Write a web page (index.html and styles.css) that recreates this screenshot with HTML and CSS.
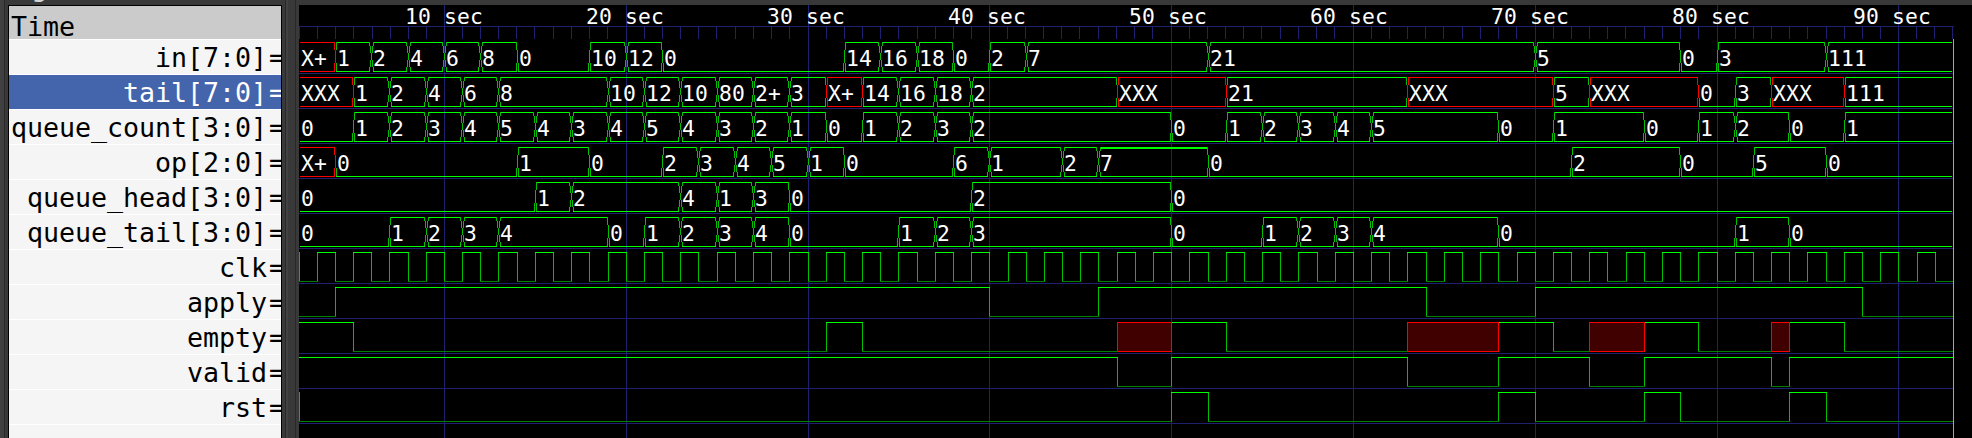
FILE: index.html
```
<!DOCTYPE html>
<html lang="en">
<head>
<meta charset="utf-8">
<title>Waveform viewer</title>
<link rel="stylesheet" href="styles.css">
</head>
<body>
<main class="viewer">
  <section class="signals">
    <div class="frame-title">Signals</div>
    <div class="signal-list">
      <div class="list-header">Time</div>
      <div class="signal"><span>in[7:0]</span><span class="eq">=</span></div>
      <div class="signal selected"><span>tail[7:0]</span><span class="eq">=</span></div>
      <div class="signal"><span>queue_count[3:0]</span><span class="eq">=</span></div>
      <div class="signal"><span>op[2:0]</span><span class="eq">=</span></div>
      <div class="signal"><span>queue_head[3:0]</span><span class="eq">=</span></div>
      <div class="signal"><span>queue_tail[3:0]</span><span class="eq">=</span></div>
      <div class="signal"><span>clk</span><span class="eq">=</span></div>
      <div class="signal"><span>apply</span><span class="eq">=</span></div>
      <div class="signal"><span>empty</span><span class="eq">=</span></div>
      <div class="signal"><span>valid</span><span class="eq">=</span></div>
      <div class="signal"><span>rst</span><span class="eq">=</span></div>
      <div class="signal"></div>
    </div>
  </section>
  <div class="splitter"></div>
  <section class="waves">
    <svg id="waves" class="wave-canvas" width="1673" height="433" viewBox="299 5 1673 433"></svg>
  </section>
</main>
<script src="waves.js"></script>
</body>
</html>
```
FILE: styles.css
```
html,
body {
  margin: 0;
  height: 100%;
  overflow: hidden;
  background: #393939;
}

.viewer {
  display: flex;
  height: 438px;
  font-family: "DejaVu Sans Mono", monospace;
}

.signals {
  display: flex;
  flex-direction: column;
  width: 277px;
  padding-left: 4px;
  border-left: 4px solid #404040;
  box-shadow: inset 1px 0 #282828;
}

.frame-title {
  display: flex;
  align-items: flex-end;
  box-sizing: border-box;
  height: 5px;
  padding: 0 0 4px 3px;
  overflow: hidden;
  color: #d4d4d4;
  font: bold 20px/20px "DejaVu Sans", sans-serif;
}

.signal-list {
  box-sizing: border-box;
  width: 274px;
  height: 433px;
  overflow: hidden;
  border: 1px solid #000;
  border-bottom: 0;
  background: #f5f5f5;
  color: #000;
  font-size: 26.667px;
  letter-spacing: -0.055px;
}

.list-header {
  box-sizing: border-box;
  height: 34px;
  padding: 5px 0 0 2px;
  border-bottom: 1px solid #fff;
  background: #cbcbcb;
  line-height: 31px;
}

.signal {
  display: flex;
  justify-content: flex-end;
  box-sizing: border-box;
  height: 35px;
  margin-right: -4px;
  border-bottom: 1px solid #fff;
  line-height: 35px;
  white-space: pre;
}

.eq {
  width: 16px;
  margin-left: 2px;
}

.selected {
  background: #4464ac;
  color: #fff;
}

.splitter {
  width: 9px;
  border-left: 1px solid #282828;
  border-right: 1px solid #282828;
  background: linear-gradient(to right, #424242 2px, #393939 2px);
}

.waves {
  flex: 1;
  padding: 5px 0 0 3px;
}

.wave-canvas {
  display: block;
  background: #000;
  font-size: 21.333px;
  letter-spacing: 0.157px;
  fill: #fff;
  shape-rendering: crispEdges;
  white-space: pre;
}

.grid { fill: #202070; }
.high { fill: #00ff00; }
.low { fill: #008000; }
.edge { fill: #00c000; }
.unknown { fill: #ff0000; }
.unknown-fill { fill: #400000; }
.cursor { fill: #ff8080; }
```
FILE: waves.js
```
const svg = document.getElementById('waves');
const NS = 'http://www.w3.org/2000/svg';
const LEFT = 299, END = 1953, ROW = 35, TOP = 42, H = 29;

const px = t => Math.floor(LEFT + (t - 2) * 18.18);

function rect(cls, x, y, w, h) {
  const r = document.createElementNS(NS, 'rect');
  r.setAttribute('class', cls);
  r.setAttribute('x', x);
  r.setAttribute('y', y);
  r.setAttribute('width', w);
  r.setAttribute('height', h);
  svg.appendChild(r);
}

function label(x, y, s) {
  const t = document.createElementNS(NS, 'text');
  t.setAttribute('x', x);
  t.setAttribute('y', y);
  t.textContent = s;
  svg.appendChild(t);
}

// "time:value" pairs
const parse = s => s.split(' ').map(p => {
  const i = p.indexOf(':');
  return [Number(p.slice(0, i)), p.slice(i + 1)];
});

const buses = [
  '2:X+ 4:1 6:2 8:4 10:6 12:8 14:0 18:10 20:12 22:0 32:14 34:16 36:18 38:0 40:2 42:7 52:21 70:5 78:0 80:3 86:111',
  '2:XXX 5:1 7:2 9:4 11:6 13:8 19:10 21:12 23:10 25:80 27:2+ 29:3 31:X+ 33:14 35:16 37:18 39:2 47:XXX 53:21 63:XXX 71:5 73:XXX 79:0 81:3 83:XXX 87:111',
  '2:0 5:1 7:2 9:3 11:4 13:5 15:4 17:3 19:4 21:5 23:4 25:3 27:2 29:1 31:0 33:1 35:2 37:3 39:2 50:0 53:1 55:2 57:3 59:4 61:5 68:0 71:1 76:0 79:1 81:2 84:0 87:1',
  '2:X+ 4:0 14:1 18:0 22:2 24:3 26:4 28:5 30:1 32:0 38:6 40:1 44:2 46:7 52:0 72:2 78:0 82:5 86:0',
  '2:0 15:1 17:2 23:4 25:1 27:3 29:0 39:2 50:0',
  '2:0 7:1 9:2 11:3 13:4 19:0 21:1 23:2 25:3 27:4 29:0 35:1 37:2 39:3 50:0 55:1 57:2 59:3 61:4 68:0 81:1 84:0'
];

let clock = '2:0';
for (let t = 3; t < 93; t++) clock += ` ${t}:${t % 2}`;

const wires = [
  clock,
  '2:0 4:1 40:0 46:1 64:0 70:1 88:0',
  '2:1 5:0 31:1 33:0 47:x 50:1 53:0 63:x 68:1 71:0 73:x 76:1 79:0 83:x 84:1 87:0',
  '2:1 47:0 50:1 63:0 68:1 73:0 76:1 83:0 84:1',
  '2:0 50:1 52:0 68:1 70:0 76:1 78:0 84:1 86:0'
];

// Time ruler and grid
rect('grid', LEFT, 26, END - LEFT + 1, 1);
for (let t = 2; t <= 93; t++) {
  const decade = Math.floor(t / 10), step = t % 10;
  const base = decade ? px(decade * 10) : 263;
  const x = base + step * 18 + (step > 5 ? 1 : 0);
  if (step) rect('grid', x, 27, 1, 12);
  else rect('grid', x, 5, 1, 433);
}
for (let i = 0; i < 11; i++) rect('grid', LEFT, 73 + ROW * i, END - LEFT, 1);
for (let k = 1; k <= 9; k++) label(405 + 181 * (k - 1), 24, `${k * 10} sec`);

const kind = v => v[0] === 'X' ? 'x' : v === '0' ? '0' : 'v';

// One side of a bus transition: steps from the rails in to column e at mid height
function half(cls, e, dir, spread, top, zero) {
  const lens = spread === 2 ? [4, 7, 4] : [8, 7];
  let y = 0;
  lens.forEach((n, i) => {
    const x = e + dir * (spread - i);
    if (!zero) rect(cls, x, top + y, 1, n);
    rect(cls, x, top + H - y - n, 1, n);
    y += n;
  });
}

buses.forEach((s, row) => {
  const top = TOP + ROW * row;
  const segs = parse(s);
  segs.forEach(([t, v], i) => {
    const last = i === segs.length - 1;
    const e0 = px(t), e1 = last ? END : px(segs[i + 1][0]);
    const k = kind(v);
    const both = (a, b) => a === 'v' && b === 'v' ? 2 : 1;
    const ls = i ? both(kind(segs[i - 1][1]), k) : 1;
    const rs = last ? 1 : both(k, kind(segs[i + 1][1]));
    const rail = k === 'x' ? 'unknown' : 'high';
    const x0 = e0 + ls, w = e1 - rs - x0 + (last ? 0 : 1);
    if (k !== '0') rect(rail, x0, top, w, v === '7' && row === 3 ? 2 : 1);
    rect(rail, x0, top + H, w, 1);
    label(e0 + 2, top + 24, v);
  });
  for (let i = 1; i < segs.length; i++) {
    const e = px(segs[i][0]);
    const a = kind(segs[i - 1][1]), b = kind(segs[i][1]);
    const spread = a === 'v' && b === 'v' ? 2 : 1;
    const sides = [[a, -1], [b, 1]].sort((p, q) => 'v0x'.indexOf(p[0]) - 'v0x'.indexOf(q[0]));
    sides.forEach(([k, dir]) => half(k === 'x' ? 'unknown' : 'edge', e, dir, spread, top, k === '0'));
  }
});

wires.forEach((s, n) => {
  const top = TOP + ROW * (n + 6);
  const segs = parse(s);
  segs.forEach(([t, v], i) => {
    const e0 = px(t), e1 = i === segs.length - 1 ? END : px(segs[i + 1][0]);
    if (v === '1') rect('high', e0, top, e1 - e0 + 1, 1);
    if (v === '0') rect('low', e0, top + H, e1 - e0 + 1, 1);
    if (i) rect('edge', e0, top + 1, 1, H - 1);
  });
  segs.forEach(([t, v], i) => {
    if (v !== 'x') return;
    const e0 = px(t), w = px(segs[i + 1][0]) - e0 + 1;
    rect('unknown', e0, top, w, H + 1);
    rect('unknown-fill', e0 + 1, top + 1, w - 2, H - 1);
  });
});
rect('edge', LEFT, 252, 1, 29);
rect('edge', LEFT, 392, 1, 29);

rect('cursor', END, 39, 1, 399);
```
